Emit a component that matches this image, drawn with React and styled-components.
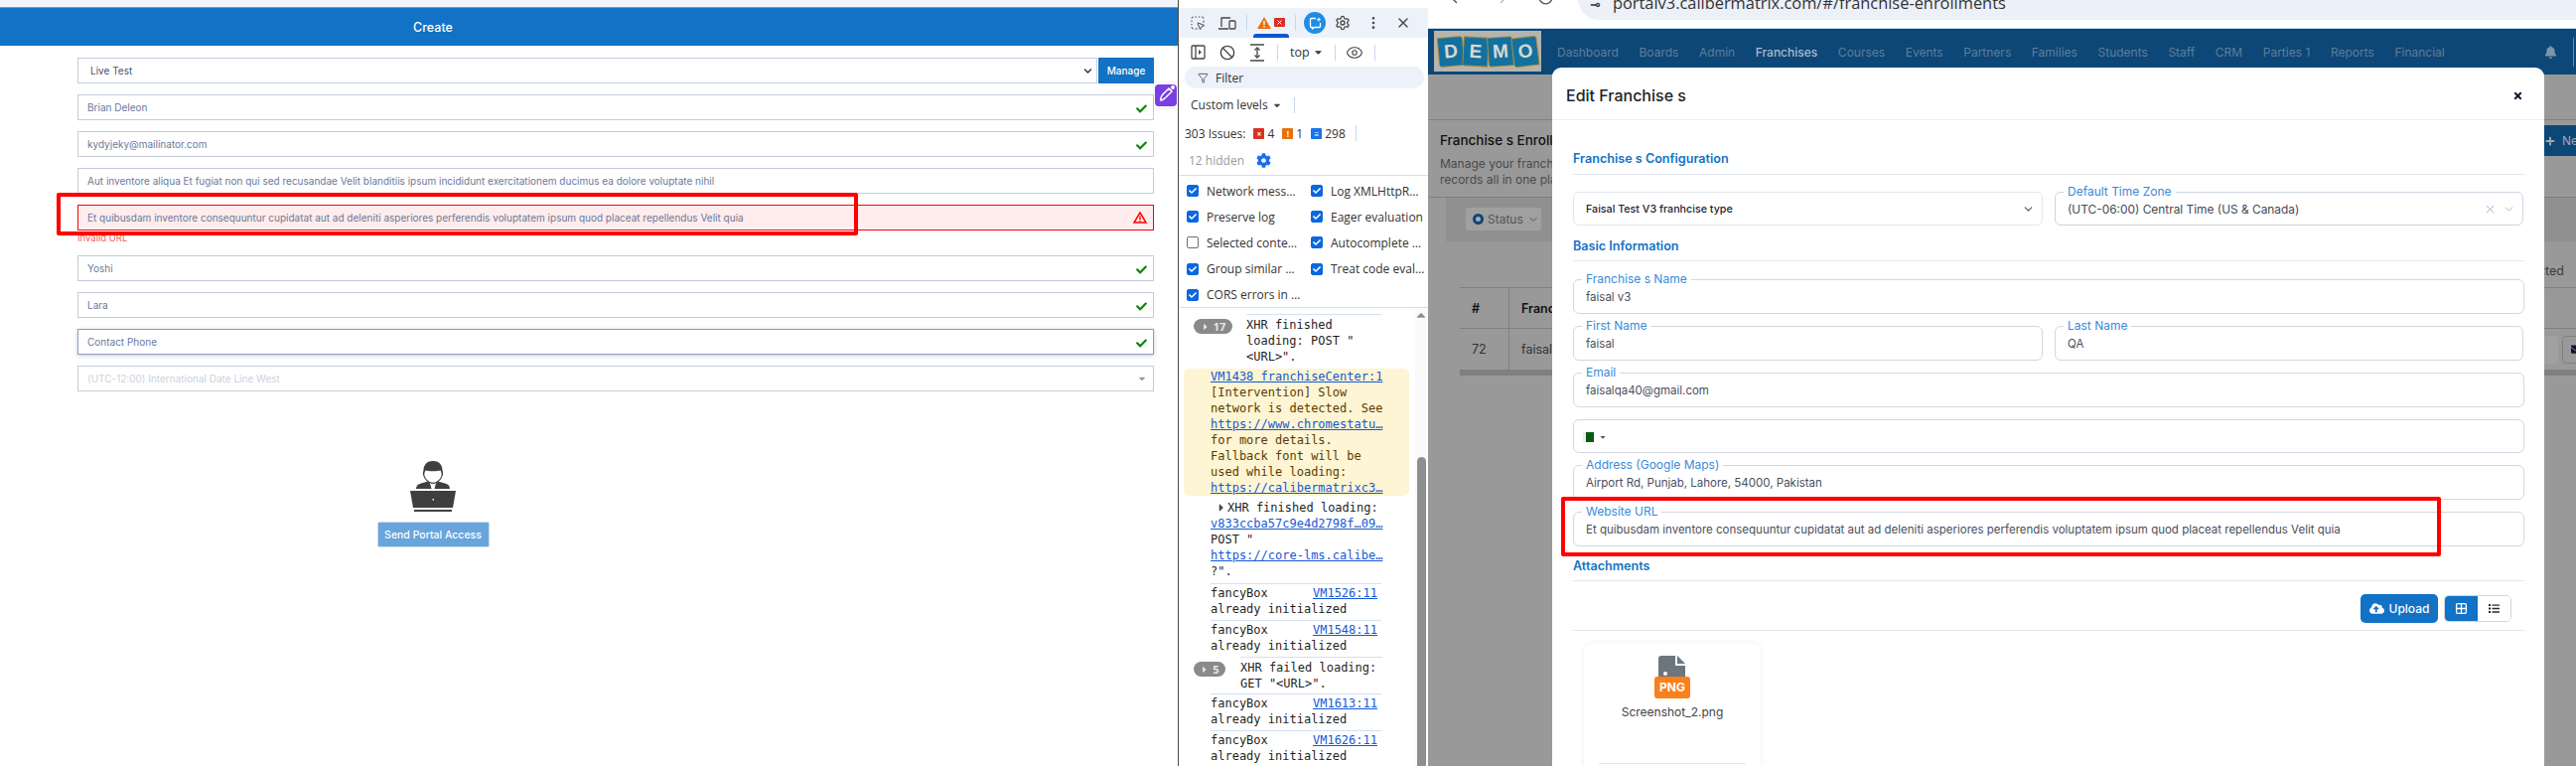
import React from 'react';
import styled, { createGlobalStyle } from 'styled-components';
import { FaCheck, FaChevronDown, FaCloudUploadAlt, FaList, FaBell, FaCaretDown, FaCaretRight, FaCaretUp, FaCog, FaTimes, FaPlus, FaEnvelope } from 'react-icons/fa';
import { SquareDashedMousePointer, Settings, EllipsisVertical, X, Ban, Eye, Funnel, ChevronDown, Grid2x2, ArrowLeft, ArrowRight, RotateCw } from 'lucide-react';

const Global = createGlobalStyle`
  html, body { margin: 0; padding: 0; background: #fff; }
  * { box-sizing: border-box; }
`;

const Screen = styled.div`
  display: flex;
  width: 2594px;
  height: 771px;
  overflow: hidden;
  font-family: Inter, 'Liberation Sans', sans-serif;
`;

/* left: the create form */
const FormPane = styled.div`
  position: relative;
  width: 1186px;
  flex-shrink: 0;
  background: #fff;
`;

const TopStrip = styled.div`
  height: 8px;
  background: #f2f6fc;
  border-bottom: 1px solid #8a97a8;
`;

const FormHeader = styled.div`
  height: 38px;
  padding-right: 314px;
  display: flex;
  align-items: center;
  justify-content: center;
  background: #1272c6;
  color: #fff;
  font-size: 12.5px;
  font-weight: 500;
`;

const FormBody = styled.div`
  display: flex;
  flex-direction: column;
  gap: 11px;
  width: 1084px;
  margin: 12px 0 0 78px;
`;

const InputRow = styled.div`
  display: flex;
  align-items: center;
  justify-content: space-between;
  height: 26px;
  padding: 0 6px 0 9px;
  border: 1px solid ${(p) => (p.$error ? '#f00' : p.$focus ? '#8f9dbd' : '#c3cbdc')};
  background: ${(p) => (p.$error ? '#ffecec' : '#fff')};
  box-shadow: ${(p) => (p.$focus ? '0 1px 4px rgba(90,110,160,.35)' : 'none')};
  color: ${(p) => (p.$muted ? '#cdd2de' : '#6a7a9a')};
  font-size: 10px;
  white-space: nowrap;
`;

const SelectGroup = styled.div`
  display: flex;
  height: 26px;
`;

const SelectBox = styled.div`
  flex: 1;
  display: flex;
  align-items: center;
  justify-content: space-between;
  padding: 0 4px 0 12px;
  border: 1px solid #c3cbdc;
  color: #4a5568;
  font-size: 10px;
`;

const ManageButton = styled.div`
  width: 56px;
  margin-left: 1px;
  display: flex;
  align-items: center;
  justify-content: center;
  background: #1272c6;
  color: #fff;
  font-size: 10px;
  font-weight: 500;
`;

const InvalidBlock = styled.div`
  position: relative;
`;

const InvalidText = styled.div`
  height: 14px;
  padding-top: 1px;
  color: #f25c5c;
  font-size: 9.5px;
  line-height: 13px;
`;

const RedMark = styled.div`
  position: absolute;
  left: ${(p) => p.$left}px;
  top: ${(p) => p.$top}px;
  width: ${(p) => p.$width}px;
  height: ${(p) => p.$height}px;
  border: 4px solid #f00;
  border-radius: 2px;
  z-index: 5;
  pointer-events: none;
`;

const CheckIcon = styled(FaCheck)`
  color: #0a860a;
  font-size: 11px;
  margin-top: 2px;
`;

const FloatingPen = styled.div`
  position: absolute;
  right: 0;
  top: 83px;
  width: 24px;
  height: 26px;
  padding: 2px 1px;
  background: #fff;
  box-shadow: 0 0 2px rgba(0, 0, 0, .15);
`;

const PortalBlock = styled.div`
  width: 872px;
  margin-top: 70px;
  display: flex;
  flex-direction: column;
  align-items: center;
  gap: 10px;
`;

const SendButton = styled.div`
  width: 113px;
  height: 26px;
  display: flex;
  align-items: center;
  justify-content: center;
  background: #68a5dc;
  border: 1px solid #cfdcea;
  border-radius: 2px;
  color: #fff;
  font-size: 10.5px;
  font-weight: 500;
`;

/* middle: devtools */
const DevTools = styled.div`
  width: 252px;
  flex-shrink: 0;
  display: flex;
  flex-direction: column;
  background: #fff;
  border-left: 1px solid #4a4a4a;
  color: #202124;
  font-family: 'Open Sans', 'Liberation Sans', sans-serif;
  font-size: 12px;
`;

const DevTop = styled.div`
  height: 8px;
`;

const TabBar = styled.div`
  display: flex;
  align-items: center;
  height: 30px;
  padding-left: 4px;
  background: #edf2fa;
`;

const ToolSlot = styled.div`
  position: relative;
  width: ${(p) => p.$w || 30}px;
  height: 28px;
  flex-shrink: 0;
  display: flex;
  align-items: center;
  justify-content: center;
  gap: 3px;
  color: #474747;
`;

const ActiveTab = styled.div`
  position: absolute;
  left: 4px;
  right: 4px;
  bottom: -1px;
  height: 4px;
  border-radius: 3px 3px 0 0;
  background: #0b57d0;
`;

const ToolSep = styled.div`
  width: 1px;
  height: 16px;
  flex-shrink: 0;
  margin: ${(p) => p.$m || '0 6px'};
  background: #c9d7ee;
`;

const AiBubble = styled.div`
  width: 22px;
  height: 22px;
  border-radius: 50%;
  background: #1d8ee6;
  display: flex;
  align-items: center;
  justify-content: center;
`;

const ToolRow = styled.div`
  display: flex;
  align-items: center;
  height: 29px;
  padding-left: 4px;
`;

const TopLabel = styled.div`
  display: flex;
  align-items: center;
  gap: 3px;
  font-size: 12.5px;
  color: #333;
`;

const FilterPill = styled.div`
  display: flex;
  align-items: center;
  gap: 7px;
  height: 22px;
  margin: 0 4px 0 6px;
  padding-left: 13px;
  border-radius: 11px;
  background: #edf2fa;
  font-size: 12px;
  color: #333;
`;

const LevelsRow = styled.div`
  display: flex;
  align-items: center;
  height: 31px;
  margin-top: 1px;
  padding-left: 12px;
  gap: 4px;
  color: #333;
`;

const IssuesRow = styled.div`
  display: flex;
  align-items: center;
  height: 26px;
  padding-left: 6px;
  gap: 2px;
  color: #333;
`;

const IssueCount = styled.span`
  margin: 0 6px 0 1px;
`;

const IssueBadge = styled.span`
  width: 11px;
  height: 11px;
  margin-left: ${(p) => p.$ml || 0}px;
  border-radius: 1px;
  background: ${(p) => p.$c};
  color: #fff;
  font-size: 8px;
  font-weight: 700;
  line-height: 11px;
  text-align: center;
`;

const HiddenRow = styled.div`
  display: flex;
  align-items: center;
  gap: 12px;
  height: 30px;
  padding-left: 10px;
  color: #9a9a9a;
  border-bottom: 1px solid #d2e0f5;
`;

const ChecksGrid = styled.div`
  display: grid;
  grid-template-columns: 125px 1fr;
  grid-auto-rows: 26.2px;
  align-items: center;
  padding: 2px 0 0 8px;
  height: 133px;
  border-bottom: 1px solid #d2e0f5;
`;

const CheckItem = styled.div`
  display: flex;
  align-items: center;
  gap: 8px;
  white-space: nowrap;
  font-size: 12px;
  color: #333;
`;

const CheckBox = styled.span`
  width: 12px;
  height: 12px;
  flex-shrink: 0;
  border-radius: 2px;
  display: flex;
  align-items: center;
  justify-content: center;
  color: #fff;
  font-size: 8px;
  background: ${(p) => (p.$on ? '#0b67e0' : '#fff')};
  border: 1px solid ${(p) => (p.$on ? '#0b67e0' : '#6f6f6f')};
`;

const ConsoleWrap = styled.div`
  flex: 1;
  min-height: 0;
  display: flex;
  overflow: hidden;
`;

const ConsoleList = styled.div`
  flex: 1;
  min-width: 0;
  padding: 6px 0 0 5px;
  font-family: 'DejaVu Sans Mono', 'Liberation Mono', monospace;
  font-size: 12px;
  line-height: 16px;
  color: #1f1f1f;
`;

const GroupRow = styled.div`
  display: flex;
  align-items: flex-start;
  height: ${(p) => p.$h}px;
`;

const GroupBadge = styled.div`
  flex-shrink: 0;
  width: ${(p) => p.$w}px;
  height: 15px;
  margin: ${(p) => p.$m};
  border-radius: 8px;
  background: #8a8a8a;
  color: #e8e8e8;
  display: flex;
  align-items: center;
  justify-content: center;
  gap: 3px;
  font-family: 'Open Sans', sans-serif;
  font-size: 11px;
  font-weight: 700;
`;

const GroupText = styled.div`
  width: ${(p) => p.$w}px;
  padding-top: 2px;
  border-top: 1px solid #d2e0f5;
  margin-left: ${(p) => p.$ml}px;
`;

const WarnBlock = styled.div`
  width: 227px;
  height: 128px;
  padding: 0 26px 0 27px;
  border-radius: 6px;
  background: #fdf5d3;
  color: #5c3b00;
`;

const Link = styled.div`
  color: #1558d6;
  text-decoration: underline;
  white-space: nowrap;
`;

const LogPlain = styled.div`
  width: 201px;
  margin-left: 27px;
  height: 76px;
  margin-top: 4px;
`;

const LogLine = styled.div`
  display: flex;
  align-items: center;
  white-space: nowrap;
  padding-left: ${(p) => p.$pl || 0}px;
`;

const LogSpacer = styled.div`
  height: 8px;
`;

const FancyRow = styled.div`
  width: 172px;
  margin-left: 27px;
  padding-top: 1px;
  height: ${(p) => p.$h || 37}px;
  border-top: 1px solid #d2e0f5;
`;

const SplitLine = styled.div`
  display: flex;
  justify-content: space-between;
  padding-right: 4px;
`;

const ScrollTrack = styled.div`
  width: 12px;
  margin-right: 1px;
  flex-shrink: 0;
  display: flex;
  flex-direction: column;
  align-items: center;
  background: #fafafa;
  color: #8e8e8e;
  font-size: 13px;
`;

const ScrollThumb = styled.div`
  width: 9px;
  flex: 1;
  margin-top: 136px;
  border-radius: 5px 5px 0 0;
  background: #8e8e8e;
`;

/* right: the browser with the page behind and the modal over it */
const Browser = styled.div`
  position: relative;
  flex: 1;
  min-width: 0;
  overflow: hidden;
  background: #999;
`;

const BrowserBar = styled.div`
  display: flex;
  align-items: flex-end;
  gap: 24px;
  height: 29px;
  padding: 0 0 8px 20px;
  background: #fff;
  border-bottom: 1px solid #cfe0f2;
  overflow: hidden;
  color: #555;
`;

const NavIcons = styled.div`
  display: flex;
  gap: 28px;
  height: 17px;
  margin-bottom: 14px;
  flex-shrink: 0;
`;

const AddressPill = styled.div`
  flex: 1;
  display: flex;
  align-items: center;
  height: 42px;
  gap: 12px;
  margin-right: -20px;
  padding-left: 12px;
  border-radius: 21px;
  background: #ebf0f9;
  color: #333;
  font-family: 'Open Sans', 'Liberation Sans', sans-serif;
  font-size: 16.4px;
  white-space: nowrap;
`;

const TuneDot = styled.span`
  font-family: 'DejaVu Sans', sans-serif;
  font-weight: 700;
  font-size: 13px;
  margin-top: 10px;
`;

const AddressText = styled.span`
  margin-top: 6px;
`;

const NavBar = styled.div`
  display: flex;
  align-items: flex-start;
  height: 46px;
  padding-left: 6px;
  background: #0c4778;
`;

const Logo = styled.div`
  width: 108px;
  height: 41px;
  margin-top: 2px;
  display: flex;
  align-items: center;
  justify-content: center;
  background: #b5b4ad;
`;

const LogoTile = styled.span`
  width: 24px;
  height: 28px;
  margin: 0 .5px;
  display: flex;
  align-items: center;
  justify-content: center;
  transform: rotate(${(p) => p.$r}deg);
  background: #13719f;
  box-shadow: 1px 1px 0 #a88a3c, -1px -1px 0 #a88a3c;
  color: #d9d9d2;
  font-family: 'Liberation Sans', sans-serif;
  font-size: 19px;
  font-weight: 700;
`;

const NavLinks = styled.div`
  display: flex;
  gap: 20.6px;
  margin: 16px 0 0 16px;
  font-size: 12px;
  line-height: 16px;
  white-space: nowrap;
`;

const NavLink = styled.span`
  color: ${(p) => (p.$on ? '#a7bccd' : '#5f7e99')};
  font-weight: ${(p) => (p.$on ? 500 : 400)};
`;

const NavBell = styled(FaBell)`
  position: absolute;
  left: 1124px;
  top: 46px;
  color: #7e95a8;
  font-size: 13px;
`;

const NavDivider = styled.div`
  position: absolute;
  left: 1153px;
  top: 38px;
  width: 1px;
  height: 29px;
  background: #6f8aa0;
`;

const PageTitleBlock = styled.div`
  display: flex;
  justify-content: space-between;
  align-items: flex-start;
  height: 79px;
  margin-top: 45px;
  padding-left: 12px;
  border-top: 1px solid #7f7f7f;
  border-bottom: 1px solid #7f7f7f;
`;

const PageTitle = styled.div`
  margin-top: 12px;
  color: #111;
  font-size: 13.5px;
  font-weight: 500;
`;

const PageSub = styled.div`
  margin-top: 8px;
  color: #4a4a4a;
  font-size: 12px;
  line-height: 16px;
  width: 120px;
  white-space: nowrap;
`;

const NewButton = styled.div`
  flex-shrink: 0;
  display: flex;
  align-items: center;
  gap: 7px;
  width: 80px;
  height: 31px;
  margin: 5px -48px 0 0;
  padding-left: 1px;
  background: #0c4778;
  color: #a5a5a5;
  font-size: 12px;
`;

const FilterBand = styled.div`
  height: 44px;
  margin-left: 18px;
  padding: 10px 0 0 20px;
  background: #909090;
`;

const StatusPill = styled.div`
  display: inline-flex;
  align-items: center;
  gap: 4px;
  width: 76px;
  height: 23px;
  padding-left: 7px;
  border-radius: 3px;
  background: #a0a0a0;
  color: #555;
  font-size: 12px;
`;

const StatusDot = styled.span`
  width: 11px;
  height: 11px;
  border-radius: 50%;
  border: 3px solid #0c4778;
  background: #aaa;
`;

const TableTop = styled.div`
  display: flex;
  justify-content: flex-end;
  height: 46px;
  padding: 22px 12px 0 0;
  color: #3c3c3c;
  font-size: 12.5px;
`;

const TableRow = styled.div`
  display: grid;
  grid-template-columns: 50px 1fr auto;
  height: ${(p) => p.$h}px;
  margin-left: 32px;
  border-top: 1px solid #7f7f7f;
  align-items: center;
  color: ${(p) => (p.$head ? '#111' : '#333')};
  font-size: 12.5px;
  font-weight: ${(p) => (p.$head ? 600 : 400)};
`;

const TableCell = styled.div`
  height: 100%;
  display: flex;
  align-items: center;
  padding-left: ${(p) => p.$pl}px;
  border-right: ${(p) => (p.$sep ? '1px solid #7f7f7f' : 'none')};
`;

const RowActions = styled.div`
  display: flex;
  gap: 4px;
  margin-right: -10px;
`;

const RowAction = styled.span`
  display: flex;
  align-items: center;
  width: 24px;
  height: 28px;
  padding-left: 8px;
  border: ${(p) => (p.$outline ? '1px solid #7f7f7f' : 'none')};
  border-radius: 4px;
  background: ${(p) => (p.$outline ? 'transparent' : '#a0a0a0')};
  color: #10132c;
`;

const TableEnd = styled.div`
  height: 6px;
  margin-left: 32px;
  background: #808080;
`;

const Modal = styled.div`
  position: absolute;
  left: 125px;
  top: 68px;
  width: 999px;
  height: 730px;
  border-radius: 9px 9px 0 0;
  background: #fff;
  overflow: hidden;
`;

const ModalHeader = styled.div`
  display: flex;
  align-items: center;
  justify-content: space-between;
  height: 53px;
  padding: 4px 21px 0 14px;
  border-bottom: 1px solid #eceef2;
  color: #222;
  font-size: 16px;
  font-weight: 500;
`;

const ModalBody = styled.div`
  padding: 0 20px 0 21px;
`;

const SectionHead = styled.div`
  height: ${(p) => p.$h || 24}px;
  margin-top: ${(p) => p.$mt || 0}px;
  line-height: 18px;
  border-bottom: 1px solid #e2e7f0;
  color: #1272c6;
  font-size: 12.6px;
  font-weight: 600;
`;

const TwoCols = styled.div`
  display: grid;
  grid-template-columns: 473px 472px;
  gap: 12px;
`;

const SelectField = styled.div`
  display: flex;
  align-items: center;
  justify-content: space-between;
  position: relative;
  height: 34px;
  margin-top: 17px;
  padding: 0 12px;
  border: 1px solid ${(p) => (p.$strong ? '#cfd4e0' : '#e2e6ee')};
  border-radius: 6px;
  color: ${(p) => (p.$strong ? '#454a55' : '#1d2130')};
  font-size: ${(p) => (p.$strong ? 11.9 : 10.7)}px;
  font-weight: ${(p) => (p.$strong ? 400 : 500)};
`;

const FieldIcons = styled.div`
  display: flex;
  align-items: center;
  gap: 6px;
  margin-right: -5px;
  color: #9aa2b4;
`;

const FieldStack = styled.div`
  display: flex;
  flex-direction: column;
  gap: 12px;
  margin-top: 18px;
`;

const Field = styled.div`
  position: relative;
  display: flex;
  align-items: center;
  gap: 5px;
  height: ${(p) => p.$h || 35}px;
  padding: 1px 12px 0;
  border: 1px solid #d3d7e3;
  border-radius: 6px;
  color: #4a4f5c;
  font-size: 11.5px;
  white-space: nowrap;
`;

const FieldLabel = styled.span`
  position: absolute;
  left: 8px;
  top: -9px;
  padding: 0 4px;
  background: #fff;
  color: #3a8ad8;
  font-size: 12px;
  line-height: 16px;
`;

const Flag = styled.span`
  width: 11px;
  height: 10px;
  margin-left: -3px;
  background: #0b5a12;
  border-left: 3px solid #eee;
`;

const FlagCaret = styled(FaCaretDown)`
  color: #555;
  font-size: 8px;
`;

const UploadRow = styled.div`
  display: flex;
  justify-content: flex-end;
  gap: 6px;
  height: 50px;
  padding: 13px 13px 0 0;
  border-bottom: 1px solid #e6e8ee;
`;

const UploadButton = styled.div`
  display: flex;
  align-items: center;
  justify-content: center;
  gap: 5px;
  width: 78px;
  height: 29px;
  border-radius: 5px;
  background: #1272c6;
  color: #fff;
  font-size: 12px;
  font-weight: 500;
`;

const ViewToggle = styled.div`
  display: flex;
  width: 68px;
  height: 27px;
  margin-top: 1px;
  border: 1px solid #cfd4e0;
  border-radius: 5px;
  overflow: hidden;
`;

const ViewOption = styled.div`
  flex: 1;
  display: flex;
  align-items: center;
  justify-content: center;
  background: ${(p) => (p.$on ? '#1272c6' : '#fff')};
  color: ${(p) => (p.$on ? '#fff' : '#2b2b2b')};
  font-size: 12px;
`;

const FileCard = styled.div`
  display: flex;
  flex-direction: column;
  align-items: center;
  width: 178px;
  height: 140px;
  margin: 12px 0 0 11px;
  padding: 13px 15px 0;
  border-radius: 10px;
  box-shadow: 0 0 6px rgba(40, 50, 70, .08);
`;

const FileIcon = styled.div`
  position: relative;
  width: 36px;
  height: 43px;
`;

const DocSvg = styled.svg`
  display: block;
  margin-left: 4px;
`;

const PngBadge = styled.span`
  position: absolute;
  left: 0;
  bottom: 0;
  width: 36px;
  height: 22px;
  border-radius: 3px;
  background: #fb7f1b;
  color: #fff;
  font-size: 12px;
  font-weight: 700;
  line-height: 22px;
  text-align: center;
`;

const FileName = styled.div`
  margin-top: 6px;
  color: #444;
  font-size: 12px;
  line-height: 16px;
`;

const CardRule = styled.div`
  align-self: stretch;
  margin-top: 43px;
  border-top: 1px solid #e2e7f0;
`;

const PersonIcon = () => (
  <svg width="46" height="51" viewBox="0 0 46 51">
    <path d="M23 0c-7 0-9.5 5-9.5 9 0 1-.6 1.500-.6 3.500 0 4.500 5 10.500 10.100 10.500s10.100-6 10.100-10.500c0-2-.6-2.500-.6-3.500 0-4-2.500-9-9.500-9z" fill="#3f3f3f" />
    <path d="M15.500 9.500c3 1 12 1 15 0 1 2 1.200 3 1.200 4 0 3.500-4.500 8.300-8.700 8.300s-8.700-4.800-8.700-8.300c0-1 .2-2 1.200-4z" fill="#fff" />
    <path d="M6 28c0-3 2-5 5-5.500l7-2 5 5 5-5 7 2c3 .5 5 2.500 5 5.500z" fill="#3f3f3f" />
    <path d="M20 22l3 3 3-3-1.500 6h-3z" fill="#fff" />
    <path d="M0 30h46l-3 17H3z" fill="#3f3f3f" />
    <rect x="22.500" y="38" width="1.500" height="1.500" fill="#fff" />
    <rect x="4" y="49" width="38" height="2" fill="#3f3f3f" />
  </svg>
);

const PenIcon = () => (
  <svg width="22" height="22" viewBox="0 0 22 22">
    <rect width="22" height="22" rx="4" fill="#7a3fe4" />
    <path d="M6 16c-.8-2 .4-4 2-6l6-6 3 3-6 6c-2 1.600-3.500 3.200-5 3z" fill="none" stroke="#fff" strokeWidth="1.500" />
    <circle cx="18" cy="3" r="2" fill="#fff" />
  </svg>
);

const WarnTriangle = () => (
  <svg width="14" height="12" viewBox="0 0 14 12">
    <path d="M7 1L13 11H1z" fill="none" stroke="#f00" strokeWidth="1.500" />
    <path d="M6.300 4.500h1.400v3.500h-1.400zM6.300 8.700h1.400v1.200h-1.400z" fill="#f00" />
  </svg>
);

const DeviceIcon = () => (
  <svg width="18" height="15" viewBox="0 0 18 15" fill="none" stroke="#474747" strokeWidth="1.300">
    <path d="M3 11V2h9M0 13h10" />
    <rect x="11" y="5" width="6" height="8" rx="1" />
  </svg>
);

const WarnTab = () => (
  <svg width="14" height="12" viewBox="0 0 14 12">
    <path d="M7 0l7 12H0z" fill="#e8710a" />
    <path d="M6.300 4h1.400v4h-1.400zM6.300 9h1.400v1.500h-1.400z" fill="#fff" />
  </svg>
);

const ErrorTab = () => (
  <svg width="11" height="10" viewBox="0 0 11 10">
    <rect width="11" height="9" rx="1" fill="#d93025" />
    <path d="M3.500 2.500l4 4M7.500 2.500l-4 4" stroke="#fff" strokeWidth="1" />
  </svg>
);

const ChatIcon = () => (
  <svg width="13" height="13" viewBox="0 0 13 13" fill="none" stroke="#fff" strokeWidth="1.300">
    <path d="M7 1.500H2.500a1 1 0 0 0-1 1v7a1 1 0 0 0 1 1h1v1.500l2-1.500h5a1 1 0 0 0 1-1V6" />
    <path d="M10 1v3.500M8.300 2.700h3.500" />
  </svg>
);

const SidebarIcon = () => (
  <svg width="15" height="15" viewBox="0 0 15 15" fill="none" stroke="#474747" strokeWidth="1.300">
    <rect x="1" y="1" width="13" height="13" rx="1" />
    <path d="M5 1v13" />
    <path d="M8 5l3 2.500L8 10z" fill="#474747" stroke="none" />
  </svg>
);

const ExpandIcon = () => (
  <svg width="14" height="18" viewBox="0 0 14 18" fill="none" stroke="#474747" strokeWidth="1.300">
    <path d="M0 1h14M0 17h14M7 4v10" />
    <path d="M4.500 6.500L7 4l2.500 2.500M4.500 11.500L7 14l2.500-2.500" />
  </svg>
);

const DocIcon = () => (
  <DocSvg width="28" height="30" viewBox="0 0 28 30">
    <path d="M3 0h14v10h10v20H0V3a3 3 0 0 1 3-3z" fill="#6d757f" />
    <path d="M19 0l8 8h-8z" fill="#6d757f" />
    <circle cx="7" cy="18" r="2" fill="#fff" />
  </DocSvg>
);

const checks = [
  ['Network mess…', true], ['Log XMLHttpR…', true],
  ['Preserve log', true], ['Eager evaluation', true],
  ['Selected conte…', false], ['Autocomplete …', true],
  ['Group similar …', true], ['Treat code eval…', true],
  ['CORS errors in …', true],
];

const navItems = ['Dashboard', 'Boards', 'Admin', 'Franchises', 'Courses', 'Events', 'Partners', 'Families', 'Students', 'Staff', 'CRM', 'Parties 1', 'Reports', 'Financial'];
const urlText = 'Et quibusdam inventore consequuntur cupidatat aut ad deleniti asperiores perferendis voluptatem ipsum quod placeat repellendus Velit quia';

const FancyBox = ({ vm, h }) => (
  <FancyRow $h={h}>
    <SplitLine>
      <span>fancyBox</span>
      <Link>{vm}</Link>
    </SplitLine>
    <div>already initialized</div>
  </FancyRow>
);

export default function App() {
  return (
    <Screen>
      <Global />
      <FormPane>
        <TopStrip />
        <FormHeader>Create</FormHeader>
        <FormBody>
          <SelectGroup>
            <SelectBox>
              Live Test
              <FaChevronDown size={9} color="#333" />
            </SelectBox>
            <ManageButton>Manage</ManageButton>
          </SelectGroup>
          <InputRow>Brian Deleon<CheckIcon /></InputRow>
          <InputRow>kydyjeky@mailinator.com<CheckIcon /></InputRow>
          <InputRow>Aut inventore aliqua Et fugiat non qui sed recusandae Velit blanditiis ipsum incididunt exercitationem ducimus ea dolore voluptate nihil</InputRow>
          <InvalidBlock>
            <InputRow $error>{urlText}<WarnTriangle /></InputRow>
            <InvalidText>Invalid URL</InvalidText>
            <RedMark $left={-21} $top={-12} $width={807} $height={43} />
          </InvalidBlock>
          <InputRow>Yoshi<CheckIcon /></InputRow>
          <InputRow>Lara<CheckIcon /></InputRow>
          <InputRow $focus>Contact Phone<CheckIcon /></InputRow>
          <InputRow $muted>
            (UTC-12:00) International Date Line West
            <FaCaretDown size={10} color="#999" />
          </InputRow>
        </FormBody>
        <PortalBlock>
          <PersonIcon />
          <SendButton>Send Portal Access</SendButton>
        </PortalBlock>
        <FloatingPen><PenIcon /></FloatingPen>
      </FormPane>

      <DevTools>
        <DevTop />
        <TabBar>
          <ToolSlot><SquareDashedMousePointer size={16} strokeWidth={1.500} /></ToolSlot>
          <ToolSlot><DeviceIcon /></ToolSlot>
          <ToolSep $m="0 2px 0 4px" />
          <ToolSlot $w={44}>
            <WarnTab />
            <ErrorTab />
            <ActiveTab />
          </ToolSlot>
          <ToolSep $m="0 8px 0 2px" />
          <AiBubble><ChatIcon /></AiBubble>
          <ToolSlot $w={34}><Settings size={16} /></ToolSlot>
          <ToolSlot $w={28}><EllipsisVertical size={16} /></ToolSlot>
          <ToolSlot $w={32}><X size={16} /></ToolSlot>
        </TabBar>
        <ToolRow>
          <ToolSlot><SidebarIcon /></ToolSlot>
          <ToolSlot><Ban size={16} /></ToolSlot>
          <ToolSlot><ExpandIcon /></ToolSlot>
          <ToolSep $m="0 12px 0 5px" />
          <TopLabel>top <FaCaretDown size={11} /></TopLabel>
          <ToolSep $m="0 4px 0 11px" />
          <ToolSlot $w={30}><Eye size={18} strokeWidth={1.500} /></ToolSlot>
          <ToolSep $m="0 0 0 5px" />
        </ToolRow>
        <FilterPill><Funnel size={11} color="#555" />Filter</FilterPill>
        <LevelsRow>
          Custom levels <FaCaretDown size={10} color="#444" />
          <ToolSep $m="0 0 0 8px" />
        </LevelsRow>
        <IssuesRow>
          303 Issues:
          <IssueBadge $c="#d93025" $ml={6}>×</IssueBadge><IssueCount>4</IssueCount>
          <IssueBadge $c="#e8710a">!</IssueBadge><IssueCount>1</IssueCount>
          <IssueBadge $c="#1a73e8">≡</IssueBadge><IssueCount>298</IssueCount>
          <ToolSep $m="0 0 0 2px" />
        </IssuesRow>
        <HiddenRow>12 hidden <FaCog size={15} color="#1a6fe8" /></HiddenRow>
        <ChecksGrid>
          {checks.map(([label, on]) => (
            <CheckItem key={label}>
              <CheckBox $on={on}>{on && <FaCheck />}</CheckBox>
              {label}
            </CheckItem>
          ))}
        </ChecksGrid>
        <ConsoleWrap>
          <ConsoleList>
            <GroupRow $h={55}>
              <GroupBadge $w={39} $m="5px 0 0 10px"><FaCaretRight size={10} />17</GroupBadge>
              <GroupText $w={136} $ml={14}>XHR finished<br />loading: POST "<br />&lt;URL&gt;".</GroupText>
            </GroupRow>
            <WarnBlock>
              <Link>VM1438 franchiseCenter:1</Link>
              <div>[Intervention] Slow</div>
              <div>network is detected. See</div>
              <Link>https://www.chromestatu…</Link>
              <div>for more details.</div>
              <div>Fallback font will be</div>
              <div>used while loading:</div>
              <Link>https://calibermatrixc3…</Link>
            </WarnBlock>
            <LogPlain>
              <LogLine $pl={5}><FaCaretRight size={12} color="#444" />XHR finished loading:</LogLine>
              <Link>v833ccba57c9e4d2798f…09…</Link>
              <div>POST "</div>
              <Link>https://core-lms.calibe…</Link>
              <div>?".</div>
            </LogPlain>
            <LogSpacer />
            <FancyBox vm="VM1526:11" />
            <FancyBox vm="VM1548:11" />
            <GroupRow $h={37}>
              <GroupBadge $w={32} $m="5px 0 0 10px"><FaCaretRight size={10} />5</GroupBadge>
              <GroupText $w={143} $ml={15}>XHR failed loading:<br />GET "&lt;URL&gt;".</GroupText>
            </GroupRow>
            <FancyBox vm="VM1613:11" />
            <FancyBox vm="VM1626:11" />
          </ConsoleList>
          <ScrollTrack>
            <FaCaretUp size={14} />
            <ScrollThumb />
          </ScrollTrack>
        </ConsoleWrap>
      </DevTools>

      <Browser>
        <BrowserBar>
          <NavIcons>
            <ArrowLeft size={17} />
            <ArrowRight size={17} color="#bbb" />
            <RotateCw size={17} />
          </NavIcons>
          <AddressPill>
            <TuneDot>⊸</TuneDot>
            <AddressText>portalv3.calibermatrix.com/#/franchise-enrollments</AddressText>
          </AddressPill>
        </BrowserBar>
        <NavBar>
          <Logo>
            <LogoTile $r={-5}>D</LogoTile>
            <LogoTile $r={3}>E</LogoTile>
            <LogoTile $r={-4}>M</LogoTile>
            <LogoTile $r={-7}>O</LogoTile>
          </Logo>
          <NavLinks>
            {navItems.map((n) => (
              <NavLink key={n} $on={n === 'Franchises'}>{n}</NavLink>
            ))}
          </NavLinks>
        </NavBar>
        <NavBell />
        <NavDivider />
        <PageTitleBlock>
          <div>
            <PageTitle>Franchise s Enrollments</PageTitle>
            <PageSub>Manage your franchise<br />records all in one place</PageSub>
          </div>
          <NewButton><FaPlus size={10} />New</NewButton>
        </PageTitleBlock>
        <FilterBand>
          <StatusPill><StatusDot />Status<ChevronDown size={12} /></StatusPill>
        </FilterBand>
        <TableTop>Selected</TableTop>
        <TableRow $head $h={41}>
          <TableCell $pl={12} $sep>#</TableCell>
          <TableCell $pl={12}>Franchise</TableCell>
          <span />
        </TableRow>
        <TableRow $h={42}>
          <TableCell $pl={12} $sep>72</TableCell>
          <TableCell $pl={12}>faisal</TableCell>
          <RowActions><RowAction /><RowAction $outline><FaEnvelope size={11} /></RowAction></RowActions>
        </TableRow>
        <TableEnd />

        <Modal>
          <ModalHeader>
            Edit Franchise s
            <FaTimes size={11} color="#10132c" />
          </ModalHeader>
          <ModalBody>
            <SectionHead $mt={30} $h={25}>Franchise s Configuration</SectionHead>
            <TwoCols>
              <SelectField>
                Faisal Test V3 franhcise type
                <FieldIcons><ChevronDown size={13} color="#555" /></FieldIcons>
              </SelectField>
              <SelectField $strong>
                <FieldLabel>Default Time Zone</FieldLabel>
                (UTC-06:00) Central Time (US &amp; Canada)
                <FieldIcons><X size={13} strokeWidth={1.500} /><ChevronDown size={13} strokeWidth={1.500} /></FieldIcons>
              </SelectField>
            </TwoCols>
            <SectionHead $mt={12} $h={24}>Basic Information</SectionHead>
            <FieldStack>
              <Field><FieldLabel>Franchise s Name</FieldLabel>faisal v3</Field>
              <TwoCols>
                <Field><FieldLabel>First Name</FieldLabel>faisal</Field>
                <Field><FieldLabel>Last Name</FieldLabel>QA</Field>
              </TwoCols>
              <Field><FieldLabel>Email</FieldLabel>faisalqa40@gmail.com</Field>
              <Field $h={34}><Flag /><FlagCaret /></Field>
              <Field><FieldLabel>Address (Google Maps)</FieldLabel>Airport Rd, Punjab, Lahore, 54000, Pakistan</Field>
              <Field>
                <FieldLabel>Website URL</FieldLabel>
                {urlText}
                <RedMark $left={-13} $top={-16} $width={886} $height={60} />
              </Field>
            </FieldStack>
            <SectionHead $mt={11} $h={24}>Attachments</SectionHead>
            <UploadRow>
              <UploadButton><FaCloudUploadAlt size={15} />Upload</UploadButton>
              <ViewToggle>
                <ViewOption $on><Grid2x2 size={13} strokeWidth={2.500} /></ViewOption>
                <ViewOption><FaList size={11} /></ViewOption>
              </ViewToggle>
            </UploadRow>
            <FileCard>
              <FileIcon>
                <DocIcon />
                <PngBadge>PNG</PngBadge>
              </FileIcon>
              <FileName>Screenshot_2.png</FileName>
              <CardRule />
            </FileCard>
          </ModalBody>
        </Modal>
      </Browser>
    </Screen>
  );
}
